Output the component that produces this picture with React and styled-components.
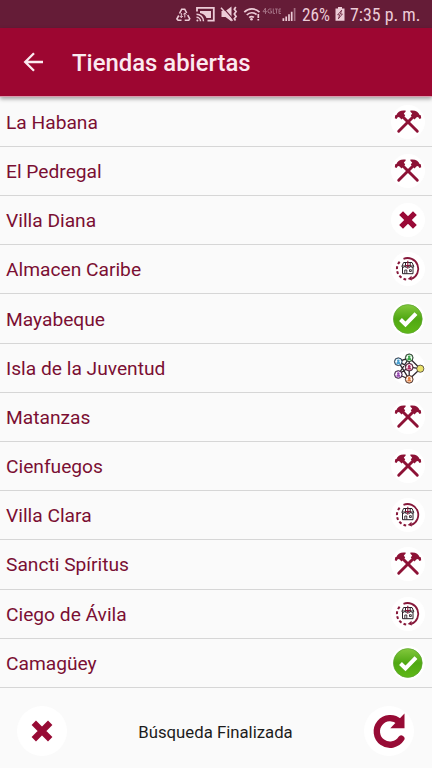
import styled, { createGlobalStyle } from "styled-components";

/*
  color scheme
  header crimson #9d0631
  status bar wine #651c37
  list text #7a0f33
  background #fafafa
*/

const GlobalStyle = createGlobalStyle`
  body {
    margin: 0;
    background-color: #fafafa;
    font-family: Roboto, "Liberation Sans", sans-serif;
  }
`;

const Screen = styled.div`
  display: flex;
  flex-direction: column;
  width: 432px;
  height: 768px;
  overflow: hidden;
  background-color: #fafafa;
`;

const StatusBar = styled.div`
  display: flex;
  align-items: center;
  justify-content: flex-end;
  box-sizing: border-box;
  flex: none;
  height: 28px;
  padding-right: 11px;
  background-color: #651c37;
  color: #ecccd7;
`;

const StatusText = styled.span`
  box-sizing: border-box;
  width: ${(props) => props.$width}px;
  padding: 2px 0 0 ${(props) => props.$indent}px;
  font-family: "Roboto Condensed", Roboto, sans-serif;
  font-size: 18px;
  line-height: 28px;
  white-space: nowrap;
`;

// scales the digits to the width of the status bar face
const Narrow = styled.span`
  display: inline-block;
  transform: scaleX(${(props) => props.$scale});
  transform-origin: left;
`;

const Header = styled.header`
  display: flex;
  align-items: center;
  flex: none;
  gap: 28px;
  height: 68px;
  padding: 0 23px 0 22px;
  background-color: #9d0631;
  border-bottom: 1px solid #d99bad;
  box-shadow: 0 2px 4px rgba(0, 0, 0, 0.35);
  z-index: 1;
`;

const Title = styled.h1`
  margin: 0;
  padding-top: 1px;
  font-size: 23.9px;
  font-weight: 500;
  color: #fbeaf0;
`;

const StoreList = styled.ul`
  flex: none;
  margin: 0;
  padding: 0.7px 0 0;
  list-style: none;
`;

const StoreRow = styled.li`
  display: flex;
  align-items: center;
  justify-content: space-between;
  box-sizing: border-box;
  height: 49.2px;
  padding-left: 6px;
  border-bottom: 1px solid #d6d6d6;
`;

const StoreName = styled.span`
  padding-top: 1px;
  font-size: 19.2px;
  color: #7a0f33;
`;

const Footer = styled.footer`
  display: flex;
  align-items: center;
  justify-content: space-between;
  flex: 1;
  padding: 7px 18px 0 17px;
`;

const Message = styled.span`
  padding-top: 1px;
  font-size: 16.75px;
  color: #1c1c1c;
`;

const RoundButton = styled.button`
  display: flex;
  align-items: center;
  justify-content: center;
  width: 50px;
  height: 50px;
  padding: 0;
  border: none;
  border-radius: 50%;
  background-color: #fff;
`;

const Icon = styled.svg`
  display: block;
  flex: none;
`;

function StatusIcons() {
  return (
    <Icon width="128" height="28" viewBox="172 0 128 28" fill="none" stroke="#ecccd7">
      {/* recycle */}
      <g strokeWidth="1.6">
        <path d="M179.5 13.5l2.2-4.3h3l2 3.8M178.8 15.5l-1.9 3.4 1.2 1.4h3.4M184.7 20.3h4l1-1.6-2-3.6" />
        <path d="M181.3 13v4.5M184.8 13v4.5M179.8 16l1.5 1.6 1.5-1.6M183.3 14.5l1.5-1.6 1.5 1.6" strokeWidth="1" />
      </g>
      {/* cast */}
      <path d="M197 11.5V7.9h16.8v12.7h-6.3" strokeWidth="1.8" />
      <path d="M200 11h11v7h-4.5q-1.5-4-6.5-5z" fill="#ecccd7" stroke="none" />
      <path d="M196.5 14.2a7 7 0 0 1 7 7M196.5 17.3a4 4 0 0 1 4 4" strokeWidth="1.5" />
      <circle cx="197.4" cy="20.4" r="1" fill="#ecccd7" stroke="none" />
      {/* muted, vibrating */}
      <path d="M221.5 11h4l6-4.5v15l-6-4.5h-4z" fill="#ecccd7" stroke="none" />
      <path d="M222.5 7.2l11.5 13" stroke="#651c37" strokeWidth="1.2" />
      <path d="M221 7.8l11.5 13" strokeWidth="1.5" />
      <path d="M235.8 7l-1.5 2.2 1.8 2.4-1.8 2.4 1.8 2.4-1.8 2.3 1.2 1.8" strokeWidth="1.7" />
      {/* wifi */}
      <g strokeWidth="1.7">
        <path d="M244.3 12.2a10.5 10.5 0 0 1 15.2 0M246.8 15a7 7 0 0 1 9.8-.5M249.2 17.6a3.8 3.8 0 0 1 4.7-.2" />
        <path d="M258.3 14v4M258.3 19v1.6" />
      </g>
      <circle cx="251.5" cy="19.3" r="1.3" fill="#ecccd7" stroke="none" />
      {/* faded 4G LTE */}
      <g stroke="#a26e82" strokeWidth="1">
        <path d="M265.5 8l-2.5 3.7h4M265.5 8v6M271.5 9h-2.5l-1 1.5v1.5l1 1h2.5v-2h-1.5M273.3 8.5v5h1.7M275 9h2.8M276.5 9v4.5M279 9v4.5h2M279 9h2M279 11.2h1.7" />
      </g>
      {/* signal */}
      <g strokeWidth="1.7">
        <path d="M283.4 21v-2.8M286.2 21v-4.6M289 21v-6.8M291.7 21v-9.2" />
        <path d="M294.6 21V8" stroke="#a26e82" />
      </g>
    </Icon>
  );
}

function Battery() {
  return (
    <Icon width="10" height="28" viewBox="0 0 10 28">
      <path d="M3 7h4v1.5h2.5v12.3H.5V8.5H3z" fill="#ecccd7" />
      <path d="M6.7 10.2L2.7 14.8h2l-1.3 4 4-4.8h-2z" fill="none" stroke="#651c37" strokeWidth="0.8" />
    </Icon>
  );
}

function BackArrow() {
  return (
    <Icon width="22" height="22" viewBox="0 0 22 22" fill="none" stroke="#fbeaf0" strokeWidth="2.3">
      <path d="M21 11H3.5M12 2.2L3.2 11l8.8 8.8" />
    </Icon>
  );
}

function Hammer() {
  return (
    <g fill="#8d1236">
      <path d="M19 19l14.3 14.3" strokeWidth="2.9" stroke="#8d1236" strokeLinecap="round" />
      <path d="M10.8 20.2l.4-2.9 1.2-.2C13.5 13.6 16.5 11.9 21.6 12.5v1.2L19.8 15.4l1.4 2.2-3.6 3.9-2.6-2.4-1.3.2-1.2 1.7z" />
    </g>
  );
}

function Tools() {
  return (
    <>
      <Hammer />
      <g transform="translate(48 0) scale(-1 1)">
        <Hammer />
      </g>
    </>
  );
}

function Cross() {
  return <path d="M17.1 17.1l13.8 13.8M30.9 17.1L17.1 30.9" stroke="#9a0a37" strokeWidth="5.4" />;
}

// store front inside a circular arrow
function Processing() {
  return (
    <g fill="none">
      <path d="M19.5 13.8a10.7 10.7 0 0 1 8 20" stroke="#86183a" strokeWidth="1.8" />
      <path d="M27.5 30.8l-3.8 3.2 4.2 1.6z" fill="#86183a" />
      <path d="M22.2 34.5A10.7 10.7 0 0 1 17 15.5" stroke="#86183a" strokeWidth="2" strokeDasharray="2.8 2.2" />
      <g stroke="#2b2028" strokeWidth="1">
        <path d="M18.5 22v6.7h10.5V22M17.8 21.5l1.8-4h8.4l1.8 4q-1.4 2-3 0-1.3 2-3 0-1.4 2-3 0-1.3 2-3 0zM18 21h11.8M21.5 17.5v4M26.2 17.5v4" />
        <path d="M20.8 28.5v-3.5h2v3.5M25.5 24.7h1.8v1.8h-1.8z" strokeWidth="0.9" />
      </g>
      <path d="M23.8 15.7v8M21 20.5h6" stroke="#86183a" strokeWidth="1.1" />
    </g>
  );
}

function Check() {
  return (
    <>
      <defs>
        <linearGradient id="green" x1="0" y1="0" x2="0" y2="1">
          <stop offset="0" stopColor="#83c83d" />
          <stop offset="0.5" stopColor="#50a813" />
          <stop offset="1" stopColor="#5fb817" />
        </linearGradient>
      </defs>
      <circle cx="23.8" cy="24" r="14.4" fill="url(#green)" stroke="#5da530" strokeWidth="0.7" />
      <path d="M16.5 24.5l5 5L32 18.7" fill="none" stroke="#fff" strokeWidth="4" />
    </>
  );
}

const people = [
  { x: 14.3, y: 17.7, color: "#4a9fd0" },
  { x: 25.2, y: 13.8, color: "#3da64a" },
  { x: 25.2, y: 23.2, color: "#b02a62" },
  { x: 14.3, y: 30.5, color: "#9645b0" },
  { x: 25.2, y: 35.3, color: "#e27f3e" },
];

function Network() {
  return (
    <g stroke="#30282f" strokeWidth="1.3">
      <path
        d="M14.3 17.7L25.2 13.8 36.3 24.7 25.2 35.3 14.3 30.5 25.2 23.2 14.3 17.7 25.2 35.3M25.2 13.8L14.3 30.5M25.2 23.2V35M25.2 23.2l11 1.5M25.2 14v9"
        fill="none"
      />
      {people.map((p) => (
        <g key={p.color}>
          <circle cx={p.x} cy={p.y} r="3.5" fill="#fff" stroke={p.color} strokeWidth="0.9" />
          <circle cx={p.x} cy={p.y} r="3.9" fill="none" strokeWidth="0.8" />
          <circle cx={p.x} cy={p.y - 1} r="1.3" fill={p.color} stroke="none" />
          <path d={`M${p.x - 2} ${p.y + 2.2}q0-2.4 2-2.4t2 2.4z`} fill={p.color} stroke="none" />
        </g>
      ))}
      <circle cx="36.3" cy="24.7" r="3.6" fill="#e9e26a" strokeWidth="0.7" />
    </g>
  );
}

function Reload() {
  return (
    <Icon width="36" height="36" viewBox="0 0 36 36">
      <path d="M30.3 25.6A13.3 13.3 0 1 1 28.2 8.7" fill="none" stroke="#970b35" strokeWidth="6.4" strokeLinecap="round" />
      <path d="M33.5 0.5v14.8H19.3z" fill="#970b35" />
    </Icon>
  );
}

const icons = {
  tools: Tools,
  cross: Cross,
  processing: Processing,
  check: Check,
  network: Network,
};

function StoreIcon({ status }) {
  const Drawing = icons[status];
  return (
    <Icon width="48" height="48" viewBox="0 0 48 48">
      <circle cx="24" cy="24" r="17" fill="#fff" />
      <Drawing />
    </Icon>
  );
}

const stores = [
  { name: "La Habana", status: "tools" },
  { name: "El Pedregal", status: "tools" },
  { name: "Villa Diana", status: "cross" },
  { name: "Almacen Caribe", status: "processing" },
  { name: "Mayabeque", status: "check" },
  { name: "Isla de la Juventud", status: "network" },
  { name: "Matanzas", status: "tools" },
  { name: "Cienfuegos", status: "tools" },
  { name: "Villa Clara", status: "processing" },
  { name: "Sancti Spíritus", status: "tools" },
  { name: "Ciego de Ávila", status: "processing" },
  { name: "Camagüey", status: "check" },
];

export default function App() {
  return (
    <Screen>
      <GlobalStyle />
      <StatusBar>
        <StatusIcons />
        <StatusText $width={35} $indent={2}>
          <Narrow $scale={0.96}>26%</Narrow>
        </StatusText>
        <Battery />
        <StatusText $width={76} $indent={5}>
          <Narrow $scale={0.99}>7:35 p. m.</Narrow>
        </StatusText>
      </StatusBar>
      <Header>
        <BackArrow />
        <Title>Tiendas abiertas</Title>
      </Header>
      <StoreList>
        {stores.map((store) => (
          <StoreRow key={store.name}>
            <StoreName>{store.name}</StoreName>
            <StoreIcon status={store.status} />
          </StoreRow>
        ))}
      </StoreList>
      <Footer>
        <RoundButton aria-label="Cancelar">
          <Icon width="24" height="24" viewBox="0 0 24 24">
            <path d="M3.8 3.8l16.4 16.4M20.2 3.8L3.8 20.2" stroke="#970b35" strokeWidth="6.2" />
          </Icon>
        </RoundButton>
        <Message>Búsqueda Finalizada</Message>
        <RoundButton aria-label="Recargar">
          <Reload />
        </RoundButton>
      </Footer>
    </Screen>
  );
}
